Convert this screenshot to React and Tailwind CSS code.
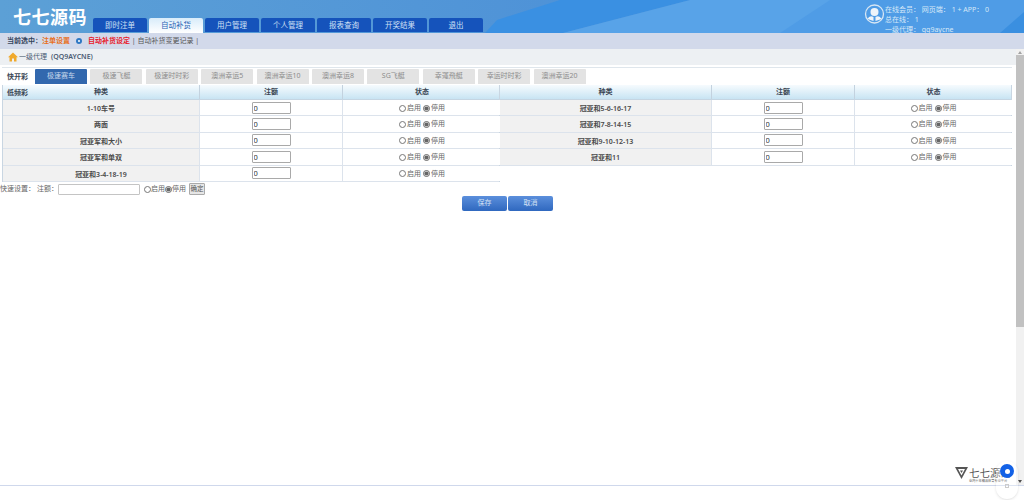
const navItems = ["即时注单", "自动补货", "用户管理", "个人管理", "报表查询", "开奖结果", "退出"];
const subTabs = ["极速赛车", "极速飞艇", "极速时时彩", "澳洲幸运5", "澳洲幸运10", "澳洲幸运8", "SG飞艇", "幸運飛艇", "幸运时时彩", "澳洲幸运20"];
const leftRows = ["1-10车号", "两面", "冠亚军和大小", "冠亚军和单双", "冠亚和3-4-18-19"];
const rightRows = ["冠亚和5-6-16-17", "冠亚和7-8-14-15", "冠亚和9-10-12-13", "冠亚和11"];

function Radio({ checked }) {
  return <input type="radio" checked={checked} readOnly className="m-0 h-[7px] w-[7px] shrink-0 accent-[#666]" />;
}

function Row({ name }) {
  return (
    <div className="grid h-[16.4px] grid-cols-[var(--cols)] border-b border-[#dce3ec]">
      <div className="flex items-center justify-center border-r border-[#dce3ec] bg-[#f1f1f1] pt-[3px] font-semibold text-[#4a4a4a]">{name}</div>
      <div className="flex items-center justify-center border-r border-[#dce3ec] bg-white">
        <input readOnly value="0" className="h-[12px] w-[39px] rounded-[1px] border border-[#a9a9a9] bg-white px-[1px] text-[7.5px] text-[#333]" />
      </div>
      <div className="flex items-center justify-center gap-[1px] bg-white pt-[1px] text-[#666]">
        <Radio />
        <span className="mr-[1px]">启用</span>
        <Radio checked />
        <span>停用</span>
      </div>
    </div>
  );
}

function Table({ rows, label, cols, className }) {
  return (
    <div className={className} style={{ "--cols": cols }}>
      <div className="relative grid h-[15px] grid-cols-[var(--cols)] border-b border-[#c5d5e2] bg-gradient-to-b from-[#f6fbfe] to-[#c8e4f3] font-semibold text-[#3a4654]">
        {label && <span className="absolute left-[4px] top-[3px]">{label}</span>}
        <div className="flex items-center justify-center border-r border-[#c3d2df] pt-[1px]">种类</div>
        <div className="flex items-center justify-center border-r border-[#c3d2df] pt-[1px]">注额</div>
        <div className="flex items-center justify-center pt-[1px]">状态</div>
      </div>
      {rows.map((name) => (
        <Row key={name} name={name} />
      ))}
    </div>
  );
}

export default function App() {
  return (
    <div className="relative flex h-[500px] w-[1024px] flex-col overflow-hidden bg-white font-['Noto_Sans','Noto_Sans_CJK_SC',sans-serif] text-[7px]">
      {/* header */}
      <header className="relative flex h-[33px] shrink-0 items-end overflow-hidden bg-gradient-to-r from-[#5ca0d6] to-[#4487d8]">
        <svg className="absolute inset-0" width="1024" height="33" viewBox="0 0 1024 33">
          <polygon points="485,33 497,20 560,0 690,0 563,33" fill="#3a90e2" />
          <polygon points="563,33 690,0 1024,0 1024,33" fill="#58a3e8" />
          <polygon points="780,33 830,0 1024,0 1024,33" fill="#4f9ce6" />
          <polygon points="1000,33 1024,12 1024,33" fill="#3a8fe0" />
        </svg>
        <h1 className="relative mb-[8px] ml-[13px] w-[80px] font-['Noto_Sans_CJK_SC',sans-serif] text-[18px] font-bold leading-[18px] tracking-[0.5px] text-white">七七源码</h1>
        <nav className="relative flex gap-[2px] text-[7.5px]">
          {navItems.map((item, i) => (
            <div
              key={item}
              className={
                i === 1
                  ? "flex h-[15px] w-[54px] items-center justify-center rounded-t-[2px] bg-gradient-to-b from-[#d8ecfa] to-white pt-[1px] text-[#2a64b4]"
                  : "flex h-[14px] w-[54px] items-center justify-center rounded-t-[2px] bg-[#1553bb] pt-[1px] text-[#cfe0f5]"
              }
            >
              {item}
            </div>
          ))}
        </nav>
        <div className="relative ml-auto mr-[14px] flex self-start pt-[5px] leading-[10px] text-[#d6e8f8]">
          <svg width="20" height="20" viewBox="0 0 20 20" className="mr-[-1px] -mt-[1px] w-[23px]">
            <circle cx="10" cy="10" r="9" fill="none" stroke="#d8e6f3" strokeWidth="1.3" />
            <circle cx="10" cy="8" r="4" fill="#eef4fa" />
            <path d="M3 15 Q5 11 9 13 L9 17 Z M17 15 Q15 11 11 13 L11 17 Z" fill="#eef4fa" />
          </svg>
          <div className="w-[125px]">
            <div>在线会员： 网页端： 1 + APP： 0</div>
            <div>总在线： 1</div>
            <div>一级代理： qq9aycne</div>
          </div>
        </div>
      </header>

      {/* selected bar */}
      <div className="flex h-[16px] shrink-0 items-center whitespace-pre bg-[#d2d9ea] pl-[7px] text-[#555]">
        <span className="font-semibold text-[#35445c]">当前选中：</span>
        <span className="font-semibold text-[#e8701c]">注单设置</span>
        <span className="mx-[6px] flex h-[6px] w-[6px] items-center justify-center rounded-full bg-[#2e78c4]">
          <span className="h-[2px] w-[2px] rounded-full bg-white" />
        </span>
        <span className="font-semibold text-[#e8202c]">自动补货设定</span>
        <span> | 自动补货变更记录 |</span>
      </div>

      <div className="flex min-h-0 flex-1">
        <main className="flex min-w-0 flex-1 flex-col">
          {/* breadcrumb */}
          <div className="flex h-[16px] shrink-0 items-center bg-[#edf0f3] pl-[8px] text-[#4a5a72]">
            <svg width="10" height="10" viewBox="0 0 10 10">
              <path d="M5 0.5L0 5.2H1.5V9.5H4V6.5H6V9.5H8.5V5.2H10Z" fill="#f0a92c" />
            </svg>
            <span className="ml-[1px]">一级代理</span>
            <span className="ml-[4px] font-semibold">(QQ9AYCNE)</span>
          </div>

          <div className="ml-[2px] mr-[4px] mt-[2px] flex h-[17px] items-end border-t border-[#dfe6ec]">
            <span className="mb-[2px] ml-[5px] w-[28px] font-semibold text-[#3a4654]">快开彩</span>
            <div className="flex gap-[3.4px]">
              {subTabs.map((tab, i) => (
                <div
                  key={tab}
                  className={
                    i === 0
                      ? "flex h-[15px] w-[52px] items-center justify-center rounded-t-[1px] bg-[#3268ae] text-[#c8d8ec]"
                      : "flex h-[15px] w-[52px] items-center justify-center rounded-t-[1px] bg-[#e3e3e3] text-[#8c8c8c]"
                  }
                >
                  {tab}
                </div>
              ))}
            </div>
          </div>

          {/* tables */}
          <div className="ml-[2px] mt-[1px] flex items-start">
            <Table rows={leftRows} label="低频彩" cols="197px 143px 158px" className="w-[498px] border-x border-[#c9d6e2]" />
            <Table rows={rightRows} cols="212px 143px 157px" className="w-[512px] border-r border-[#c9d6e2]" />
          </div>

          {/* quick setting */}
          <div className="mt-[1px] flex h-[13px] items-center text-[#666]">
            <span>快速设置：</span>
            <span className="ml-[2px]">注额：</span>
            <input readOnly className="h-[11px] w-[82px] rounded-[1px] border border-[#c4c4c4] bg-white" />
            <span className="ml-[4px] flex items-center">
              <Radio />
              启用
              <Radio checked />
              停用
            </span>
            <button className="ml-[3px] h-[12px] w-[16px] whitespace-nowrap rounded-[1px] border border-[#aaa] bg-[#e6e6e6] text-[6.5px] leading-none text-[#555]">确定</button>
          </div>

          <div className="flex justify-center gap-[1px] pr-[1px]">
            <button className="h-[15px] w-[45px] rounded-[2px] bg-gradient-to-b from-[#5b8fdc] to-[#2f68bf] text-[#d5e2f5]">保存</button>
            <button className="h-[15px] w-[45px] rounded-[2px] bg-gradient-to-b from-[#5b8fdc] to-[#2f68bf] text-[#d5e2f5]">取消</button>
          </div>
        </main>

        {/* scrollbar */}
        <aside className="flex w-[8px] shrink-0 flex-col items-center bg-[#f1f1f1]">
          <div className="mt-[2px] h-0 w-0 border-x-[2.5px] border-b-[3px] border-x-transparent border-b-[#a3a3a3]" />
          <div className="mt-[1px] h-[272px] w-full bg-[#c1c1c1]" />
          <div className="mb-[2px] mt-auto h-0 w-0 border-x-[2.5px] border-t-[3px] border-x-transparent border-t-[#505050]" />
        </aside>
      </div>

      <footer className="h-[15px] shrink-0 border-t border-[#cfd8ec] bg-white" />

      {/* bottom right logo */}
      <div className="absolute left-[955px] top-[467px] flex items-start">
        <svg width="13" height="12" viewBox="0 0 13 12">
          <path d="M0 0H13L6.5 12Z" fill="#555" />
          <path d="M3 2H10L6.5 8.5Z" fill="#fff" />
          <path d="M5 3.5H8L6.5 6Z" fill="#555" />
        </svg>
        <div className="ml-[1px] flex flex-col font-['Noto_Sans_CJK_JP',serif] text-[#555]">
          <span className="whitespace-nowrap text-[10.5px] leading-[11px]">七七源码</span>
          <span className="mt-[1px] whitespace-nowrap text-[3.2px] leading-[4px]">业内十年精品体育专业平台</span>
        </div>
      </div>
      <div className="absolute left-[996px] top-[461px] flex h-[38px] w-[22px] flex-col items-center rounded-full bg-white/30 pt-[3px] shadow-sm">
        <div className="flex h-[14px] w-[14px] items-center justify-center rounded-full bg-[#1261e6]">
          <span className="h-[5px] w-[5px] rounded-full bg-white" />
        </div>
        <div className="mt-[6px] h-[4px] w-[4px] border border-[#ccc]" />
      </div>
    </div>
  );
}
